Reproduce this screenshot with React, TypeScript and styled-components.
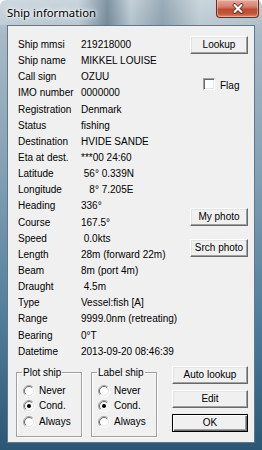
import React from 'react'
import styled, { createGlobalStyle } from 'styled-components'

const GlobalStyle = createGlobalStyle`
	html, body {
		margin: 0;
		padding: 0;
		background: #fff;
	}
	body {
		width: 262px;
		height: 450px;
		overflow: hidden;
	}
`

const Window = styled.div`
	width: 262px;
	height: 450px;
	box-sizing: border-box;
	display: flex;
	flex-direction: column;
	border-radius: 6px 6px 0 0;
	background:
		linear-gradient(90deg,
			rgba(255, 255, 255, 0.2) 0%,
			rgba(255, 255, 255, 0.12) 30%,
			rgba(30, 60, 80, 0.4) 41%,
			rgba(255, 255, 255, 0.05) 50%,
			rgba(40, 70, 90, 0.25) 62%,
			rgba(255, 255, 255, 0.15) 76%,
			rgba(255, 255, 255, 0) 100%) top / 100% 25px no-repeat,
		linear-gradient(180deg, #c2cfd8 0%, #a7b9c6 8%, #84a0b4 38%, #4f7c9a 72%, #2b5775 100%);
`

const TitleBar = styled.div`
	height: 25px;
	flex-shrink: 0;
	display: flex;
	align-items: flex-start;
`

const Title = styled.div`
	padding: 5px 0 0 7px;
	font-family: 'Noto Sans', sans-serif;
	font-size: 11.3px;
	line-height: 15px;
	color: #000;
	text-shadow: 0 0 5px #fff, 0 0 3px #fff, 0 0 8px rgba(255, 255, 255, 0.8);
`

const CloseButton = styled.div`
	margin-left: auto;
	margin-right: 3px;
	width: 43px;
	height: 18px;
	box-sizing: border-box;
	display: flex;
	align-items: center;
	justify-content: center;
	border: 1px solid #6e2a20;
	border-top: none;
	border-radius: 0 0 4px 4px;
	background: linear-gradient(180deg, #e2a99c 0%, #d6806e 40%, #c04a34 55%, #c45636 80%, #dc8a70 100%);
	box-shadow: inset 0 0 0 1px rgba(255, 220, 210, 0.45);
`

const Client = styled.div`
	flex: 1;
	margin: 0 7px 7px;
	background: #f0f0f0;
	border: 1px solid #61788a;
	display: flex;
	flex-direction: column;
	font-family: 'Liberation Sans', Arial, sans-serif;
	font-size: 10px;
	color: #000;
`

const Top = styled.div`
	display: flex;
`

const FieldTable = styled.div`
	margin: 11px 0 0 10px;
	width: 172px;
	display: grid;
	grid-template-columns: 63px 1fr;
	grid-auto-rows: 16.15px;
	align-items: center;
`

const Label = styled.div`
	line-height: 12px;
	white-space: nowrap;
`

const Value = styled.div`
	line-height: 12px;
	white-space: pre;
`

const SideCol = styled.div`
	width: 58px;
	display: flex;
	flex-direction: column;
`

const Button = styled.div<{ $top?: number; $default?: boolean }>`
	margin-top: ${p => p.$top ?? 0}px;
	height: 18px;
	box-sizing: border-box;
	display: flex;
	align-items: center;
	justify-content: center;
	background: #f0f0f0;
	line-height: 12px;
	white-space: nowrap;
	border: 1px solid;
	border-color: ${p => (p.$default ? '#000' : '#fff #696969 #696969 #fff')};
	box-shadow: ${p =>
		p.$default
			? 'inset 1px 1px 0 #fff, inset -1px -1px 0 #696969, inset -2px -2px 0 #a0a0a0'
			: 'inset -1px -1px 0 #a0a0a0, inset 1px 1px 0 #e3e3e3'};
`

const FlagRow = styled.div`
	margin: 24px 0 0 13px;
	display: flex;
	align-items: center;
	gap: 5px;
	height: 12px;
`

const CheckBox = styled.span`
	width: 12px;
	height: 12px;
	box-sizing: border-box;
	background: #fff;
	border: 1px solid;
	border-color: #a0a0a0 #fff #fff #a0a0a0;
	box-shadow: inset 1px 1px 0 #696969, inset -1px -1px 0 #e3e3e3;
`

const FlagText = styled.span`
	line-height: 12px;
	padding-top: 3px;
`

const Bottom = styled.div`
	display: flex;
	margin-top: 6px;
	padding-left: 8px;
`

const GroupBox = styled.fieldset<{ $gap?: number }>`
	margin: 1px 0 0 ${p => p.$gap ?? 0}px;
	width: 66px;
	height: 70px;
	box-sizing: border-box;
	padding: 4px 0 0 6px;
	border: 1px solid #a0a0a0;
	box-shadow: inset 1px 1px 0 #fff, 1px 1px 0 #fff;
	min-inline-size: 0;
`

const Legend = styled.legend`
	padding: 0 1px;
	margin-left: -1px;
	line-height: 12px;
`

const RadioRow = styled.div`
	height: 15.5px;
	display: flex;
	align-items: center;
	gap: 4px;
	line-height: 12px;
`

const ButtonStack = styled.div`
	margin-left: 15px;
	width: 76px;
	display: flex;
	flex-direction: column;
	gap: 6px;
`

const Radio = ({ checked }: { checked?: boolean }) => (
	<svg width="12" height="12" viewBox="0 0 12 12">
		<circle cx="6" cy="6" r="5.5" fill="#fff" />
		<path d="M2.1 9.9 A5.5 5.5 0 0 1 9.9 2.1" stroke="#a0a0a0" fill="none" />
		<path d="M9.9 2.1 A5.5 5.5 0 0 1 2.1 9.9" stroke="#fff" fill="none" />
		<path d="M2.8 9.2 A4.5 4.5 0 0 1 9.2 2.8" stroke="#696969" fill="none" />
		<path d="M9.2 2.8 A4.5 4.5 0 0 1 2.8 9.2" stroke="#e3e3e3" fill="none" />
		{checked && <circle cx="6" cy="6" r="2" fill="#000" />}
	</svg>
)

const CloseGlyph = () => (
	<svg width="12" height="11" viewBox="0 0 12 11">
		<path d="M2.5 2 L9.5 9 M9.5 2 L2.5 9" stroke="#5a1a10" strokeWidth="3.6" strokeLinecap="round" />
		<path d="M2.5 2 L9.5 9 M9.5 2 L2.5 9" stroke="#fff" strokeWidth="2.2" strokeLinecap="round" />
	</svg>
)

const fields: [string, string][] = [
	['Ship mmsi', '219218000'],
	['Ship name', 'MIKKEL LOUISE'],
	['Call sign', 'OZUU'],
	['IMO number', '0000000'],
	['Registration', 'Denmark'],
	['Status', 'fishing'],
	['Destination', 'HVIDE SANDE'],
	['Eta at dest.', '***00 24:60'],
	['Latitude', ' 56° 0.339N'],
	['Longitude', '   8° 7.205E'],
	['Heading', '336°'],
	['Course', '167.5°'],
	['Speed', ' 0.0kts'],
	['Length', '28m (forward 22m)'],
	['Beam', '8m (port 4m)'],
	['Draught', ' 4.5m'],
	['Type', 'Vessel:fish [A]'],
	['Range', '9999.0nm (retreating)'],
	['Bearing', '0°T'],
	['Datetime', '2013-09-20 08:46:39'],
]

const options = ['Never', 'Cond.', 'Always']

const RadioGroup = ({ title, gap }: { title: string; gap?: number }) => (
	<GroupBox $gap={gap}>
		<Legend>{title}</Legend>
		{options.map(o => (
			<RadioRow key={o}>
				<Radio checked={o === 'Cond.'} />
				<span>{o}</span>
			</RadioRow>
		))}
	</GroupBox>
)

const App = () => (
	<>
		<GlobalStyle />
		<Window>
			<TitleBar>
				<Title>Ship information</Title>
				<CloseButton>
					<CloseGlyph />
				</CloseButton>
			</TitleBar>
			<Client>
				<Top>
					<FieldTable>
						{fields.map(([l, v]) => (
							<React.Fragment key={l}>
								<Label>{l}</Label>
								<Value>{v}</Value>
							</React.Fragment>
						))}
					</FieldTable>
					<SideCol>
						<Button $top={10}>Lookup</Button>
						<FlagRow>
							<CheckBox />
							<FlagText>Flag</FlagText>
						</FlagRow>
						<Button $top={118}>My photo</Button>
						<Button $top={13}>Srch photo</Button>
					</SideCol>
				</Top>
				<Bottom>
					<RadioGroup title="Plot ship" />
					<RadioGroup title="Label ship" gap={9} />
					<ButtonStack>
						<Button>Auto lookup</Button>
						<Button>Edit</Button>
						<Button $default>OK</Button>
					</ButtonStack>
				</Bottom>
			</Client>
		</Window>
	</>
)

export default App
